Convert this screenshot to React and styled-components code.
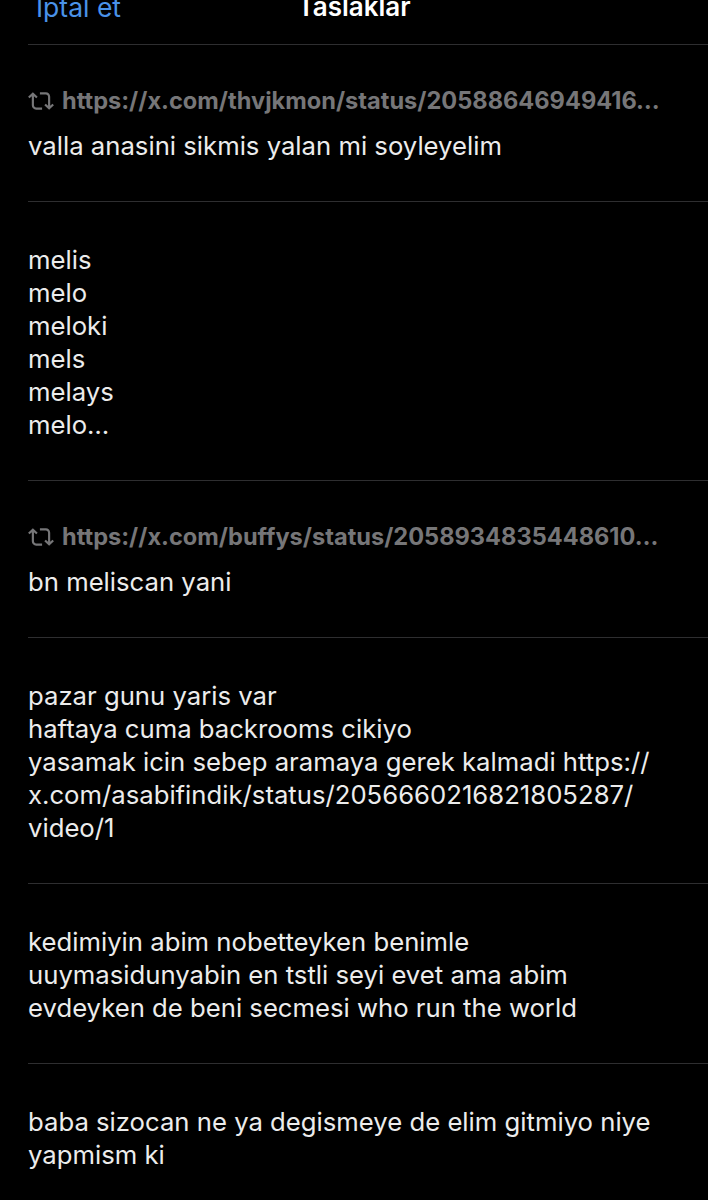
import styled, { createGlobalStyle } from 'styled-components'


const GlobalStyle = createGlobalStyle`
    html, body {
        margin: 0;
        padding: 0;
        background: #000;
    }

    body {
        font-family: Inter, "Noto Sans", "Liberation Sans", sans-serif;
        color: #ececec;
        -webkit-font-smoothing: antialiased;
    }
`

const Page = styled.div`
    width: 708px;
    min-height: 1200px;
    background: #000;
    overflow: hidden;
`

const Header = styled.header`
    height: 44px;
    display: grid;
    grid-template-columns: 1fr auto 1fr;
    align-items: start;
    overflow: hidden;
`

const CancelButton = styled.button`
    justify-self: start;
    margin: -8px 0 0 36px;
    padding: 0;
    border: none;
    background: none;
    font-family: inherit;
    font-size: 26.5px;
    line-height: 30px;
    color: #4a92e8;
`

const Title = styled.h1`
    margin: -8px 0 0;
    font-size: 26px;
    line-height: 30px;
    font-weight: 600;
    color: #fff;
`

const Rule = styled.div`
    margin-left: 28px;
    height: 1px;
    background: #2e2e30;
`

const DraftList = styled.ul`
    list-style: none;
    margin: 0;
    padding: 0;
`

const DraftRow = styled.li`
    margin-left: 28px;
    padding: 41px 28px 39px 0;
    border-bottom: 1px solid #2e2e30;
`

const QuoteLine = styled.div`
    display: flex;
    align-items: center;
    gap: 8px;
    height: 29px;
    margin-bottom: 14px;
    color: #767678;
    font-size: 23.6px;
    font-weight: 700;
    white-space: nowrap;

    svg {
        flex: none;
        width: 26px;
        height: 26px;
        margin-top: 1px;
        fill: currentColor;
    }
`

const QuoteUrl = styled.span`
    overflow: hidden;
    text-overflow: ellipsis;
`

const DraftText = styled.p`
    margin: 0;
    font-size: 25.7px;
    line-height: 33px;
    white-space: pre;
    color: #ececec;
`

const RetweetIcon = () => (
    <svg viewBox="0 0 24 24" aria-hidden="true">
        <path d="M4.5 3.88l4.432 4.14-1.364 1.46L5.5 7.55V16c0 1.1.896 2 2 2H13v2H7.5c-2.209 0-4-1.79-4-4V7.55L1.432 9.48.068 8.02 4.5 3.88zM16.5 6H11V4h5.5c2.209 0 4 1.79 4 4v8.45l2.068-1.93 1.364 1.46-4.432 4.140-4.432-4.14 1.364-1.46 2.068 1.93V8c0-1.1-.896-2-2-2z" />
    </svg>
)

const drafts = [
    {
        quote: 'https://x.com/thvjkmon/status/20588646949416…',
        text: 'valla anasini sikmis yalan mi soyleyelim',
    },
    {
        text: 'melis\nmelo\nmeloki\nmels\nmelays\nmelo…',
    },
    {
        quote: 'https://x.com/buffys/status/2058934835448610…',
        text: 'bn meliscan yani',
    },
    {
        text: 'pazar gunu yaris var\nhaftaya cuma backrooms cikiyo\nyasamak icin sebep aramaya gerek kalmadi https://\nx.com/asabifindik/status/2056660216821805287/\nvideo/1',
    },
    {
        text: 'kedimiyin abim nobetteyken benimle\nuuymasidunyabin en tstli seyi evet ama abim\nevdeyken de beni secmesi who run the world',
    },
    {
        text: 'baba sizocan ne ya degismeye de elim gitmiyo niye\nyapmism ki',
    },
]

const App = () => {
    return (
        <Page>
            <GlobalStyle />
            <Header>
                <CancelButton>İptal et</CancelButton>
                <Title>Taslaklar</Title>
            </Header>
            <Rule />
            <DraftList>
                {drafts.map((draft, i) => (
                    <DraftRow key={i}>
                        {draft.quote && (
                            <QuoteLine>
                                <RetweetIcon />
                                <QuoteUrl>{draft.quote}</QuoteUrl>
                            </QuoteLine>
                        )}
                        <DraftText>{draft.text}</DraftText>
                    </DraftRow>
                ))}
            </DraftList>
        </Page>
    )
}

export default App;
